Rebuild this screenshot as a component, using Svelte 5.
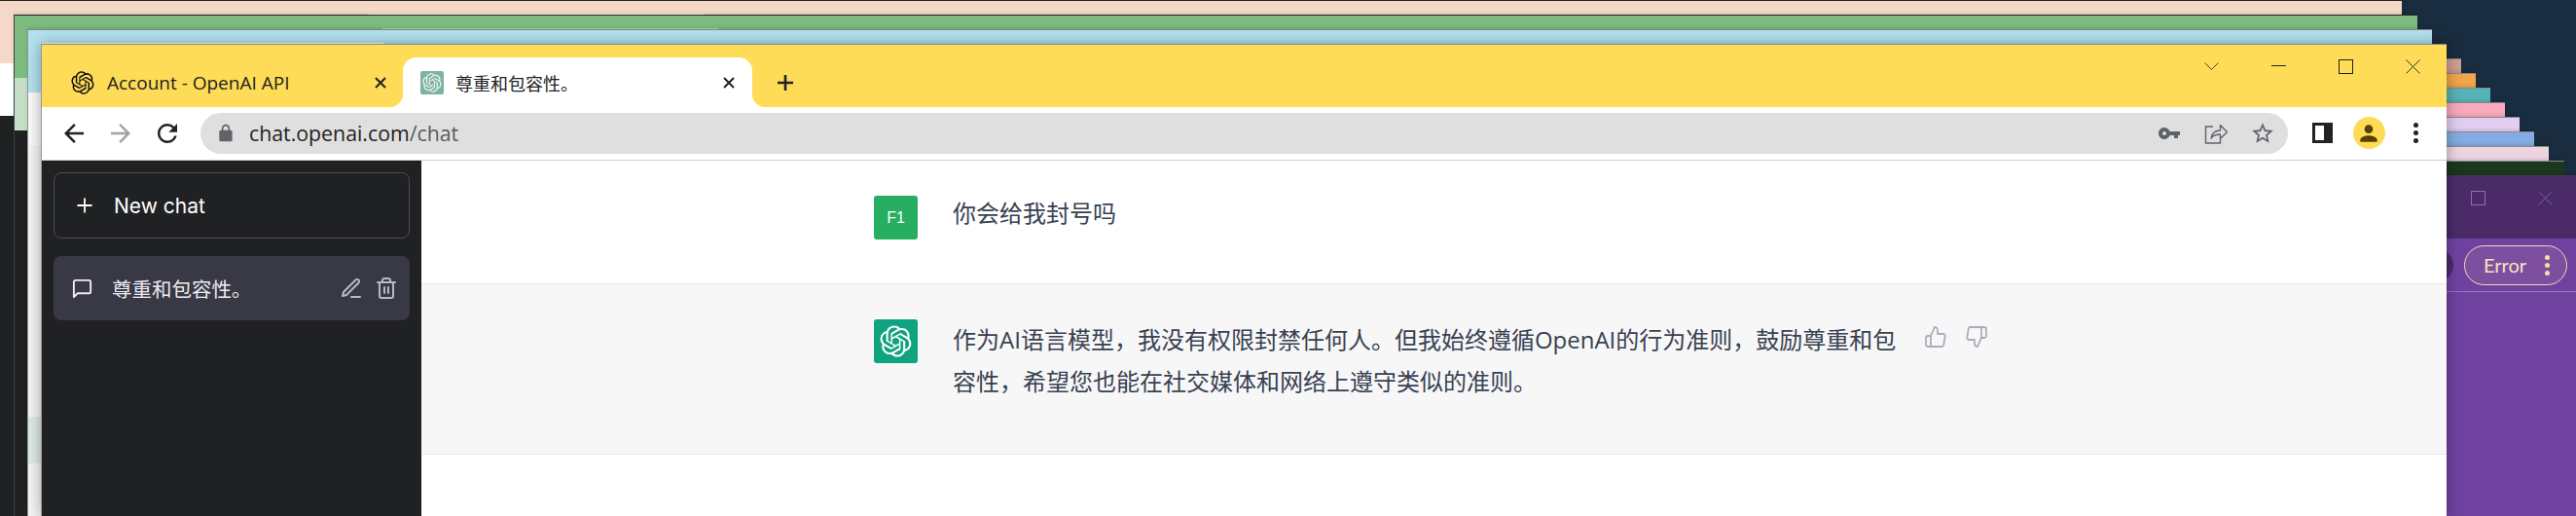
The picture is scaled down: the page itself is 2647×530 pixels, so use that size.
<script lang="ts">
  // Stack of cascaded browser windows on a desktop; the yellow one is in front.
  const OPENAI =
    'M37.5324 16.8707C37.9808 15.5241 38.1363 14.0974 37.9886 12.6859C37.8409 11.2744 37.3934 9.91076 36.676 8.68622C35.6126 6.83404 33.9882 5.3676 32.0373 4.4985C30.0864 3.62941 27.9098 3.40259 25.8215 3.85078C24.8796 2.7893 23.7219 1.94125 22.4257 1.36341C21.1295 0.785575 19.7249 0.491269 18.3058 0.500197C16.1708 0.495044 14.0893 1.16803 12.3614 2.42214C10.6335 3.67624 9.34853 5.44666 8.6917 7.47815C7.30085 7.76286 5.98686 8.3414 4.8377 9.17505C3.68854 10.0087 2.73073 11.0782 2.02839 12.312C0.956464 14.1591 0.498905 16.2988 0.721698 18.4228C0.944492 20.5467 1.83612 22.5449 3.268 24.1293C2.81966 25.4759 2.66413 26.9026 2.81182 28.3141C2.95951 29.7256 3.40701 31.0892 4.12437 32.3138C5.18791 34.1659 6.8123 35.6322 8.76321 36.5013C10.7141 37.3704 12.8907 37.5973 14.9789 37.1492C15.9208 38.2107 17.0786 39.0587 18.3747 39.6366C19.6709 40.2144 21.0755 40.5087 22.4946 40.4998C24.6307 40.5054 26.7133 39.8321 28.4418 38.5772C30.1704 37.3223 31.4556 35.5506 32.1119 33.5179C33.5027 33.2332 34.8167 32.6547 35.9659 31.821C37.115 30.9874 38.0728 29.9178 38.7752 28.684C39.8458 26.8371 40.3023 24.6979 40.0789 22.5748C39.8556 20.4517 38.9639 18.4544 37.5324 16.8707ZM22.4978 37.8849C20.7443 37.8874 19.0459 37.2733 17.6994 36.1501C17.7601 36.117 17.8666 36.0586 17.936 36.0161L25.9004 31.4156C26.1003 31.3019 26.2663 31.137 26.3813 30.9378C26.4964 30.7386 26.5563 30.5124 26.5549 30.2825V19.0542L29.9213 20.998C29.9389 21.0068 29.9541 21.0198 29.9656 21.0359C29.977 21.052 29.9842 21.0707 29.9867 21.0902V30.3889C29.9842 32.375 29.1946 34.2791 27.7909 35.6841C26.3872 37.0892 24.4838 37.8806 22.4978 37.8849ZM6.39227 31.0064C5.51397 29.4888 5.19742 27.7107 5.49804 25.9832C5.55718 26.0187 5.66048 26.0818 5.73461 26.1244L13.699 30.7248C13.8975 30.8408 14.1233 30.902 14.3532 30.902C14.583 30.902 14.8088 30.8408 15.0073 30.7248L24.731 25.1103V28.9979C24.7321 29.0177 24.7283 29.0376 24.7199 29.0556C24.7115 29.0736 24.6988 29.0893 24.6829 29.1012L16.6317 33.7497C14.9096 34.7416 12.8643 35.0097 10.9447 34.4954C9.02506 33.9811 7.38785 32.7263 6.39227 31.0064ZM4.29707 13.6194C5.17156 12.0998 6.55279 10.9364 8.19885 10.3327C8.19885 10.4013 8.19491 10.5228 8.19491 10.6071V19.808C8.19351 20.0378 8.25334 20.2638 8.36823 20.4629C8.48312 20.6619 8.64893 20.8267 8.84863 20.9404L18.5723 26.5542L15.206 28.4979C15.1894 28.5089 15.1703 28.5155 15.1505 28.5173C15.1307 28.5191 15.1107 28.516 15.0924 28.5082L7.04046 23.8557C5.32135 22.8601 4.06716 21.2235 3.55289 19.3046C3.03862 17.3858 3.30624 15.3413 4.29707 13.6194ZM31.955 20.0556L22.2312 14.4411L25.5976 12.4981C25.6142 12.4872 25.6333 12.4805 25.6531 12.4787C25.6729 12.4769 25.6928 12.4801 25.7111 12.4879L33.7631 17.1364C34.9967 17.849 36.0017 18.8982 36.6606 20.1613C37.3194 21.4244 37.6047 22.849 37.4832 24.2684C37.3617 25.6878 36.8382 27.0432 35.9743 28.1759C35.1103 29.3086 33.9415 30.1717 32.6047 30.6641C32.6047 30.5947 32.6047 30.4733 32.6047 30.3889V21.188C32.6066 20.9586 32.5474 20.7328 32.4332 20.5338C32.319 20.3348 32.154 20.1698 31.955 20.0556ZM35.3055 15.0128C35.2464 14.9765 35.1431 14.9142 35.069 14.8717L27.1045 10.2712C26.906 10.1554 26.6803 10.0943 26.4504 10.0943C26.2206 10.0943 25.9948 10.1554 25.7963 10.2712L16.0726 15.8858V11.9982C16.0715 11.9783 16.0753 11.9585 16.0837 11.9405C16.0921 11.9225 16.1048 11.9068 16.1207 11.8949L24.1719 7.25025C25.4053 6.53903 26.8158 6.19376 28.2383 6.25482C29.6608 6.31589 31.0364 6.78077 32.2044 7.59508C33.3723 8.40939 34.2842 9.53945 34.8334 10.8531C35.3826 12.1667 35.5464 13.6095 35.3055 15.0128ZM14.2424 21.9419L10.8752 19.9981C10.8576 19.9893 10.8423 19.9763 10.8309 19.9602C10.8195 19.9441 10.8122 19.9254 10.8098 19.9058V10.6071C10.8107 9.18295 11.2173 7.78848 11.9819 6.58696C12.7466 5.38544 13.8377 4.42659 15.1275 3.82264C16.4173 3.21869 17.8524 2.99464 19.2649 3.1767C20.6775 3.35876 22.0089 3.93941 23.1034 4.85067C23.0427 4.88379 22.937 4.94215 22.8668 4.98473L14.9024 9.58517C14.7025 9.69878 14.5366 9.86356 14.4215 10.0626C14.3065 10.2616 14.2466 10.4877 14.2479 10.7175L14.2424 21.9419ZM16.071 17.9991L20.4018 15.4978L24.7325 17.9975V22.9985L20.4018 25.4983L16.071 22.9985V17.9991Z';

  interface BackWindow {
    left: number;
    top: number;
    right: number;
    title: string;
    bar: string;
    page: string;
    tab?: [number, number, string];
  }

  // back to front, each one 15px lower than the last
  const BACK: BackWindow[] = [
    { left: -1, top: 0, right: 2468, title: '#f6d8c8', bar: '#fff', page: '#202123' },
    { left: 14, top: 15, right: 2484, title: '#7bbb7d', bar: '#c3e0c6', page: '#202123', tab: [364, 345, '#f3e6da'] },
    { left: 28, top: 30, right: 2499, title: '#b3e2ef', bar: '#fbfbfb', page: '#f5f5f6', tab: [364, 345, '#98cfa0'] },
    { left: 58, top: 60, right: 2529, title: '#cf9f8f', bar: '#fff', page: '#fff' },
    { left: 60, top: 75, right: 2544, title: '#f1a54a', bar: '#fff', page: '#fff' },
    { left: 60, top: 90, right: 2559, title: '#55b3b7', bar: '#fff', page: '#fff' },
    { left: 60, top: 105, right: 2574, title: '#f8a9bb', bar: '#fff', page: '#fff' },
    { left: 60, top: 120, right: 2589, title: '#e2cef2', bar: '#fff', page: '#fff' },
    { left: 60, top: 135, right: 2604, title: '#84ace3', bar: '#fff', page: '#fff' },
    { left: 60, top: 150, right: 2619, title: '#eed3e3', bar: '#fff', page: '#fff' },
    { left: 60, top: 165, right: 2635, title: '#1b381c', bar: '#fff', page: '#fff' },
  ];

  const ANSWER =
    '作为AI语言模型，我没有权限封禁任何人。但我始终遵循OpenAI的行为准则，鼓励尊重和包容性，希望您也能在社交媒体和网络上遵守类似的准则。';
</script>

{#snippet logo(size: number, color: string)}
  <svg width={size} height={size} viewBox="0 0 41 41"><path d={OPENAI} fill={color} /></svg>
{/snippet}

{#snippet maximize(stroke: string)}
  <svg width="15" height="15" viewBox="0 0 15 15" fill="none"><rect x="0.5" y="0.5" width="14" height="14" {stroke} /></svg>
{/snippet}

{#snippet closeCross(stroke: string)}
  <svg width="15" height="15" viewBox="0 0 15 15" fill="none"><path d="M0.5 0.5l14 14M14.5 0.5l-14 14" {stroke} /></svg>
{/snippet}

<div class="desktop">
  {#each BACK as w}
    <div class="win" style="left:{w.left}px;top:{w.top}px;width:{w.right - w.left}px;background:{w.page}">
      {#if w.tab}
        <div class="tab-peek" style="left:{w.tab[0]}px;width:{w.tab[1]}px;background:{w.tab[2]}"></div>
      {/if}
      <div class="win-title" style="background:{w.title}"></div>
      <div class="win-bar" style="background:{w.bar}"></div>
    </div>
  {/each}

  <div class="row-peek"></div>

  <!-- purple window, only its right end sticks out -->
  <div class="win purple">
    <div class="purple-title">
      <span class="ctl">{@render maximize('#8f70ad')}</span>
      <span class="ctl">{@render closeCross('#7d5c9e')}</span>
    </div>
    <div class="purple-bar">
      <span class="purple-avatar"></span>
      <div class="error-pill">
        <span>Error</span>
        <span class="error-dots"><i></i><i></i><i></i></span>
      </div>
    </div>
  </div>

  <div class="win front">
    <div class="tab-peek front-peek"></div>
    <header class="titlebar">
      <div class="tab">
        {@render logo(24, '#111')}
        <span class="tab-label">Account - OpenAI API</span>
        <svg class="tab-x" width="14" height="14" viewBox="0 0 14 14"><path d="M2 2l10 10M12 2L2 12" stroke="#222" stroke-width="2" /></svg>
      </div>
      <div class="tab active">
        <span class="favicon">{@render logo(20, '#e9f3ef')}</span>
        <span class="tab-label">尊重和包容性。</span>
        <svg class="tab-x" width="14" height="14" viewBox="0 0 14 14"><path d="M2 2l10 10M12 2L2 12" stroke="#222" stroke-width="2" /></svg>
      </div>
      <svg class="new-tab" width="18" height="18" viewBox="0 0 18 18"><path d="M9 1v16M1 9h16" stroke="#222" stroke-width="2.6" /></svg>
      <div class="controls">
        <span class="ctl"><svg width="15" height="9" viewBox="0 0 15 9" fill="none"><path d="M0.5 0.5l7 7 7-7" stroke="#444" /></svg></span>
        <span class="ctl"><svg width="15" height="15" viewBox="0 0 15 15" fill="none"><path d="M0 6.5h15" stroke="#222" /></svg></span>
        <span class="ctl">{@render maximize('#222')}</span>
        <span class="ctl">{@render closeCross('#333')}</span>
      </div>
    </header>

    <div class="toolbar">
      <span class="tool"><svg width="30" height="30" viewBox="0 0 24 24"><path d="M20 11H7.830l5.590-5.590L12 4l-8 8 8 8 1.410-1.410L7.830 13H20z" fill="#222" /></svg></span>
      <span class="tool"><svg width="30" height="30" viewBox="0 0 24 24"><path d="M4 11h12.170l-5.590-5.590L12 4l8 8-8 8-1.410-1.410L16.170 13H4z" fill="#a3a3a3" /></svg></span>
      <span class="tool"><svg width="30" height="30" viewBox="0 0 24 24"><path d="M17.650 6.350A7.958 7.958 0 0 0 12 4c-4.420 0-7.990 3.580-7.990 8s3.570 8 7.990 8c3.730 0 6.840-2.550 7.730-6h-2.080A5.990 5.990 0 0 1 12 18c-3.310 0-6-2.690-6-6s2.690-6 6-6c1.660 0 3.140.690 4.220 1.780L13 11h7V4z" fill="#222" /></svg></span>
      <div class="omnibox">
        <svg class="lock" width="20" height="20" viewBox="0 0 24 24"><path d="M18 8h-1V6c0-2.760-2.240-5-5-5S7 3.240 7 6v2H6c-1.100 0-2 .9-2 2v10c0 1.100.9 2 2 2h12c1.100 0 2-.9 2-2V10c0-1.100-.9-2-2-2zM9 6c0-1.660 1.340-3 3-3s3 1.340 3 3v2H9V6z" fill="#5f6368" /></svg>
        <span class="url">chat.openai.com<span class="url-path">/chat</span></span>
        <span class="omni-icons">
          <span class="tool"><svg width="24" height="24" viewBox="0 0 24 24"><path d="M12.650 10C11.830 7.670 9.610 6 7 6c-3.310 0-6 2.690-6 6s2.690 6 6 6c2.610 0 4.830-1.670 5.650-4H17v3h4v-3h2v-4H12.650zM7 14c-1.100 0-2-.9-2-2s.9-2 2-2 2 .9 2 2-.9 2-2 2z" fill="#5f6368" /></svg></span>
          <span class="tool"><svg width="24" height="24" viewBox="0 0 24 24" fill="none" stroke="#5f6368" stroke-width="1.400"><path d="M9 5H1.500v17h15V18" /><path d="M7 17c.8-5 4.500-8 9.500-8V3.500l7 7-7 7v-4.500c-4 0-7.500 1-9.500 4z" stroke-linejoin="round" /></svg></span>
          <span class="tool"><svg width="26" height="26" viewBox="0 0 24 24"><path d="M22 9.240l-7.190-.62L12 2 9.190 8.630 2 9.240l5.460 4.730L5.820 21 12 17.270 18.180 21l-1.630-7.030L22 9.240zM12 15.400l-3.760 2.270 1-4.280-3.320-2.880 4.380-.38L12 6.100l1.710 4.040 4.380.38-3.320 2.880 1 4.280L12 15.400z" fill="#5f6368" /></svg></span>
        </span>
      </div>
      <span class="tool side-btn"><span class="side-panel"></span></span>
      <span class="tool">
        <span class="profile">
          <svg width="26" height="26" viewBox="0 0 24 24"><path d="M12 12c2.210 0 4-1.790 4-4s-1.790-4-4-4-4 1.790-4 4 1.790 4 4 4zm0 2c-2.670 0-8 1.340-8 4v2h16v-2c0-2.660-5.330-4-8-4z" fill="#5a3f00" /></svg>
        </span>
      </span>
      <span class="tool kebab"><i></i><i></i><i></i></span>
    </div>

    <div class="page">
      <aside class="sidebar">
        <div class="new-chat">
          <svg width="18" height="18" viewBox="0 0 18 18"><path d="M9 1.500v15M1.500 9h15" stroke="#fff" stroke-width="1.800" /></svg>
          <span>New chat</span>
        </div>
        <div class="history-item">
          <svg width="23" height="23" viewBox="0 0 24 24" fill="none" stroke="#ececf1" stroke-width="2" stroke-linejoin="round"><path d="M21 15a2 2 0 0 1-2 2H7l-4 4V5a2 2 0 0 1 2-2h14a2 2 0 0 1 2 2z" /></svg>
          <span class="history-label">尊重和包容性。</span>
          <span class="history-actions">
            <svg width="24" height="24" viewBox="0 0 24 24" fill="none" stroke="#b9b9c6" stroke-width="2" stroke-linecap="round" stroke-linejoin="round"><path d="M12 21h9" /><path d="M16.500 3.500a2.121 2.121 0 0 1 3 3L7 19l-4 1 1-4L16.500 3.500z" /></svg>
            <svg width="24" height="24" viewBox="0 0 24 24" fill="none" stroke="#b9b9c6" stroke-width="2" stroke-linecap="round" stroke-linejoin="round"><path d="M3 6h18" /><path d="M19 6v14a2 2 0 0 1-2 2H7a2 2 0 0 1-2-2V6m3 0V4a2 2 0 0 1 2-2h4a2 2 0 0 1 2 2v2" /><path d="M10 11v6M14 11v6" /></svg>
          </span>
        </div>
      </aside>

      <main class="chat">
        <section class="msg">
          <div class="avatar user">F1</div>
          <p class="text short">你会给我封号吗</p>
        </section>
        <section class="msg assistant">
          <div class="avatar bot">{@render logo(33, '#fff')}</div>
          <p class="text">{ANSWER}</p>
          <div class="feedback">
            <svg width="24" height="24" viewBox="0 0 24 24" fill="none" stroke="#acacbe" stroke-width="1.800" stroke-linecap="round" stroke-linejoin="round"><path d="M14 9V5a3 3 0 0 0-3-3l-4 9v11h11.280a2 2 0 0 0 2-1.700l1.380-9a2 2 0 0 0-2-2.300zM7 22H4a2 2 0 0 1-2-2v-7a2 2 0 0 1 2-2h3" /></svg>
            <svg width="24" height="24" viewBox="0 0 24 24" fill="none" stroke="#acacbe" stroke-width="1.800" stroke-linecap="round" stroke-linejoin="round"><path d="M10 15v4a3 3 0 0 0 3 3l4-9V2H5.720a2 2 0 0 0-2 1.700l-1.380 9a2 2 0 0 0 2 2.300zm7-13h2.670A2.310 2.310 0 0 1 22 4v7a2.310 2.310 0 0 1-2.330 2H17" /></svg>
          </div>
        </section>
      </main>
    </div>
  </div>
</div>

<style>
  :global(body) {
    margin: 0;
    background: #1a2c3f;
  }
  .desktop {
    position: relative;
    width: 2647px;
    height: 530px;
    overflow: hidden;
    background: #1a2c3f;
    font-family: "Open Sans", "Noto Sans CJK SC", sans-serif;
  }

  /* windows on the desktop */
  .win {
    position: absolute;
    bottom: 0;
    box-sizing: border-box;
    border-top: 1px solid rgba(40, 40, 40, 0.55);
    border-left: 1px solid rgba(90, 90, 90, 0.6);
    box-shadow: 0 -2px 3px rgba(0, 0, 0, 0.1);
  }
  .win-title {
    height: 64px;
  }
  .win-bar {
    height: 54px;
  }
  .tab-peek {
    position: absolute;
    top: -2px;
    height: 1px;
  }
  .row-peek {
    position: absolute;
    left: 29px;
    top: 428px;
    width: 16px;
    height: 48px;
    background: #dfeae7;
  }

  .purple {
    left: 2400px;
    top: 180px;
    width: 250px;
    background: #6f42a0;
  }
  .purple-title {
    height: 64px;
    display: flex;
    justify-content: flex-end;
    background: #4a2b68;
  }
  .purple-bar {
    height: 54px;
    display: flex;
    align-items: center;
    justify-content: flex-end;
    gap: 11px;
    padding-right: 12px;
    border-bottom: 1px solid #9a72c8;
    background: #6f42a0;
  }
  .purple-avatar {
    width: 33px;
    height: 33px;
    border-radius: 50%;
    background: #4a2a6c;
  }
  .error-pill {
    box-sizing: border-box;
    width: 106px;
    height: 41px;
    display: flex;
    align-items: center;
    justify-content: space-between;
    padding: 0 17px 0 19px;
    border: 1.5px solid #f3d9b5;
    border-radius: 21px;
    background: #7e4f9f;
    color: #f8e3c2;
    font: 20px "Lato", sans-serif;
  }
  .error-dots {
    display: flex;
    flex-direction: column;
    gap: 3px;
  }
  .error-dots i {
    width: 5px;
    height: 5px;
    border-radius: 50%;
    background: #f6dfaa;
  }

  .front {
    left: 42px;
    top: 45px;
    width: 2472px;
    background: #fff;
    display: flex;
    flex-direction: column;
    box-shadow: 0 0 14px rgba(0, 0, 0, 0.35);
  }
  .front-peek {
    left: 0;
    width: 351px;
    background: #d9dcc8;
  }

  /* title bar and tabs */
  .titlebar {
    height: 64px;
    flex: none;
    display: flex;
    align-items: flex-end;
    background: #fedc57;
    color: #222;
  }
  .tab {
    box-sizing: border-box;
    position: relative;
    width: 371px;
    height: 51px;
    margin-left: 0;
    display: flex;
    align-items: center;
    gap: 13px;
    padding: 0 16px 0 30px;
    font-size: 19px;
  }
  .tab-label {
    flex: 1;
    white-space: nowrap;
  }
  .tab-x {
    flex: none;
  }
  .tab.active {
    width: 359px;
    gap: 12px;
    padding: 0 17px 0 18px;
    background: #fff;
    border-radius: 14px 14px 0 0;
    font-size: 18px;
  }
  .tab.active::before,
  .tab.active::after {
    content: "";
    position: absolute;
    bottom: 0;
    width: 14px;
    height: 14px;
  }
  .tab.active::before {
    left: -14px;
    background: radial-gradient(circle at 0 0, transparent 14px, #fff 14.5px);
  }
  .tab.active::after {
    right: -14px;
    background: radial-gradient(circle at 100% 0, transparent 14px, #fff 14.5px);
  }
  .favicon {
    width: 24px;
    height: 24px;
    flex: none;
    display: flex;
    align-items: center;
    justify-content: center;
    background: #7eb3a1;
    border-radius: 2px;
  }
  .new-tab {
    align-self: center;
    margin: 14px 0 0 25px;
  }
  .controls {
    margin-left: auto;
    align-self: flex-start;
    display: flex;
  }
  .ctl {
    width: 69px;
    height: 45px;
    display: flex;
    align-items: center;
    justify-content: center;
  }

  /* toolbar */
  .toolbar {
    box-sizing: border-box;
    height: 55px;
    flex: none;
    display: flex;
    align-items: center;
    padding: 0 8px 1px 9px;
    border-bottom: 1px solid #cdcdcd;
    background: #fff;
  }
  .tool {
    width: 48px;
    height: 42px;
    flex: none;
    display: flex;
    align-items: center;
    justify-content: center;
  }
  .omnibox {
    flex: 1;
    height: 42px;
    margin: 0 11px 0 10px;
    display: flex;
    align-items: center;
    gap: 14px;
    padding: 0 2px 0 16px;
    border-radius: 21px;
    background: #dfdfdf;
  }
  .lock {
    flex: none;
  }
  .url {
    flex: 1;
    font-size: 21.3px;
    line-height: 1;
    color: #1f1f1f;
  }
  .url-path {
    color: #5b5b5b;
  }
  .omni-icons {
    display: flex;
  }
  .side-panel {
    box-sizing: border-box;
    width: 21px;
    height: 21px;
    border: 3px solid #222;
    border-right-width: 9px;
    background: #fff;
  }
  .profile {
    width: 33px;
    height: 33px;
    display: flex;
    align-items: center;
    justify-content: center;
    border-radius: 50%;
    background: #fedc57;
  }
  .kebab {
    flex-direction: column;
    gap: 3px;
  }
  .kebab i {
    width: 5px;
    height: 5px;
    border-radius: 50%;
    background: #222;
  }

  /* page */
  .page {
    flex: 1;
    display: flex;
    min-height: 0;
  }
  .sidebar {
    box-sizing: border-box;
    width: 390px;
    flex: none;
    display: flex;
    flex-direction: column;
    gap: 18px;
    padding: 12px;
    background: #202123;
  }
  .new-chat {
    box-sizing: border-box;
    height: 68px;
    display: flex;
    align-items: center;
    gap: 21px;
    padding-left: 22px;
    border: 1px solid #4d4d4f;
    border-radius: 8px;
    color: #fff;
    font: 400 21px "Inter", sans-serif;
  }
  .history-item {
    height: 66px;
    display: flex;
    align-items: center;
    gap: 19px;
    padding: 0 12px 0 18px;
    border-radius: 8px;
    background: #393845;
    color: #ececf1;
    font-size: 20.5px;
  }
  .history-label {
    flex: 1;
  }
  .history-actions {
    display: flex;
    gap: 12px;
  }

  /* chat */
  .chat {
    flex: 1;
    background: #fff;
  }
  .msg {
    box-sizing: border-box;
    height: 127px;
    display: flex;
    gap: 36px;
    padding: 36px 0 0 465px;
    border-bottom: 1px solid #e5e5e5;
  }
  .msg.assistant {
    height: 175px;
    background: #f7f7f8;
  }
  .avatar {
    width: 45px;
    height: 45px;
    flex: none;
    display: flex;
    align-items: center;
    justify-content: center;
    border-radius: 3px;
    color: #fff;
  }
  .avatar.user {
    background: #27ae60;
    font: 16px "Liberation Sans", sans-serif;
  }
  .avatar.bot {
    background: #10a37f;
  }
  .text {
    width: 978px;
    margin: -1px 0 0;
    font-size: 24px;
    line-height: 43px;
    color: #374151;
  }
  .text.short {
    margin-top: -4px;
  }
  .feedback {
    display: flex;
    gap: 18px;
    margin: 6px 0 0 -16px;
  }
</style>
